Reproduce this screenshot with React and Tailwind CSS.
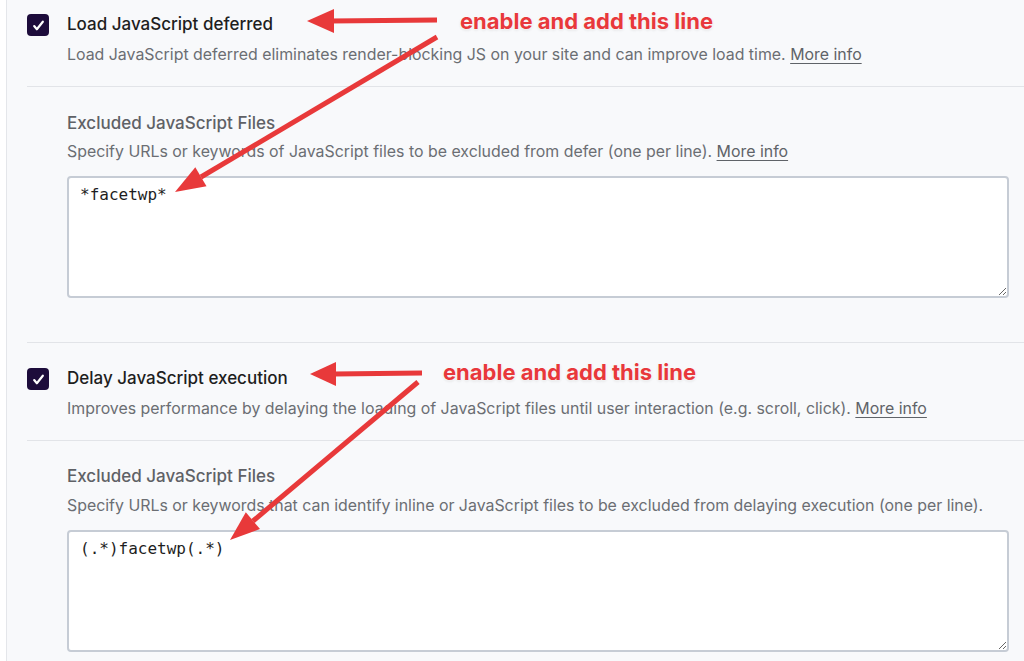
import React from 'react';

const font = { fontFamily: 'Inter, "Noto Sans", sans-serif' };

// Checked box in the dark purple of the settings page
const CheckBox = () => (
  <div className="flex h-[22px] w-[22px] shrink-0 items-center justify-center rounded-[4px] bg-[#1d0c3b]">
    <svg width="13" height="13" viewBox="0 0 24 24" fill="none" stroke="white" strokeWidth="4" strokeLinecap="round" strokeLinejoin="round">
      <path d="M4 13l5 6L20 5" />
    </svg>
  </div>
);

const MoreInfo = () => (
  <a className="text-[#5f6368] underline decoration-[#5f6368] underline-offset-[3px]">More info</a>
);

const Option = ({ title, children }) => (
  <div className="flex gap-[18px]">
    <div className="pt-[2px]">
      <CheckBox />
    </div>
    <div className="flex-1">
      <div className="text-[17px] leading-[24px] font-medium text-[#1e1e1e]">{title}</div>
      <div className="mt-[8px] text-[15.9px] leading-[22px] text-[#6b6e73]">{children}</div>
    </div>
  </div>
);

const Excluded = ({ children, value, gap }) => (
  <div className="pl-[40px]">
    <div className="text-[17px] leading-[24px] font-medium text-[#5f6166]">Excluded JavaScript Files</div>
    <div className={`${gap} text-[15.9px] leading-[22px] text-[#6b6e73]`}>{children}</div>
    <textarea
      readOnly
      defaultValue={value}
      className="mt-[13px] block h-[122px] w-[942px] rounded-[4px] border-2 border-[#c6ccd5] bg-white px-[11px] pt-[6px] text-[16px] leading-[22px] text-[#1e1e1e] outline-none"
      style={{ fontFamily: '"DejaVu Sans Mono", monospace' }}
    />
  </div>
);

const Label = ({ className }) => (
  <div
    className={`absolute text-[22px] leading-[26px] font-bold text-[#e8383b] [text-shadow:0_0_2px_#fff,0_0_3px_#fff,0_1px_3px_rgba(0,0,0,0.15)] ${className}`}
    style={font}
  >
    enable and add this line
  </div>
);

export default function App() {
  return (
    <div className="h-[661px] overflow-hidden bg-white pl-[6px]" style={font}>
      <div className="relative h-full border-l border-[#e4e6ea] bg-[#f8f9fb] pl-[20px]">
        <div className="pt-[12px]">
          <Option title="Load JavaScript deferred">
            Load JavaScript deferred eliminates render-blocking JS on your site and can improve load time. <MoreInfo />
          </Option>
          <div className="mt-[20px] h-px bg-[#e2e4e8]" />
          <div className="pt-[24px]">
            <Excluded value="*facetwp*" gap="mt-[6px]">
              Specify URLs or keywords of JavaScript files to be excluded from defer (one per line). <MoreInfo />
            </Excluded>
          </div>
          <div className="mt-[44px] h-px bg-[#e2e4e8]" />
          <div className="pt-[23px]">
            <Option title="Delay JavaScript execution">
              Improves performance by delaying the loading of JavaScript files until user interaction (e.g. scroll, click). <MoreInfo />
            </Option>
          </div>
          <div className="mt-[20px] h-px bg-[#e2e4e8]" />
          <div className="pt-[23px]">
            <Excluded value="(.*)facetwp(.*)" gap="mt-[7px]">
              Specify URLs or keywords that can identify inline or JavaScript files to be excluded from delaying execution (one per line).
            </Excluded>
          </div>
        </div>
      </div>

      {/* annotation arrows drawn over the screenshot */}
      <svg className="pointer-events-none absolute left-0 top-0" width="1024" height="661">
        <g stroke="#e8393a" strokeWidth="5" fill="#e8393a">
          <line x1="437" y1="20" x2="330" y2="21" />
          <polygon stroke="none" points="307,21 334,9 334,33" />
          <line x1="437" y1="37" x2="201" y2="177" />
          <polygon stroke="none" points="175,192 206.5,186.2 195.3,167.2" />
          <line x1="422" y1="373" x2="334" y2="374" />
          <polygon stroke="none" points="310,374 336,362 336,386" />
          <line x1="418" y1="382" x2="253" y2="521" />
          <polygon stroke="none" points="230,540 260,529 245.8,512.2" />
        </g>
      </svg>
      <Label className="left-[460px] top-[8px]" />
      <Label className="left-[443px] top-[359px]" />
    </div>
  );
}
